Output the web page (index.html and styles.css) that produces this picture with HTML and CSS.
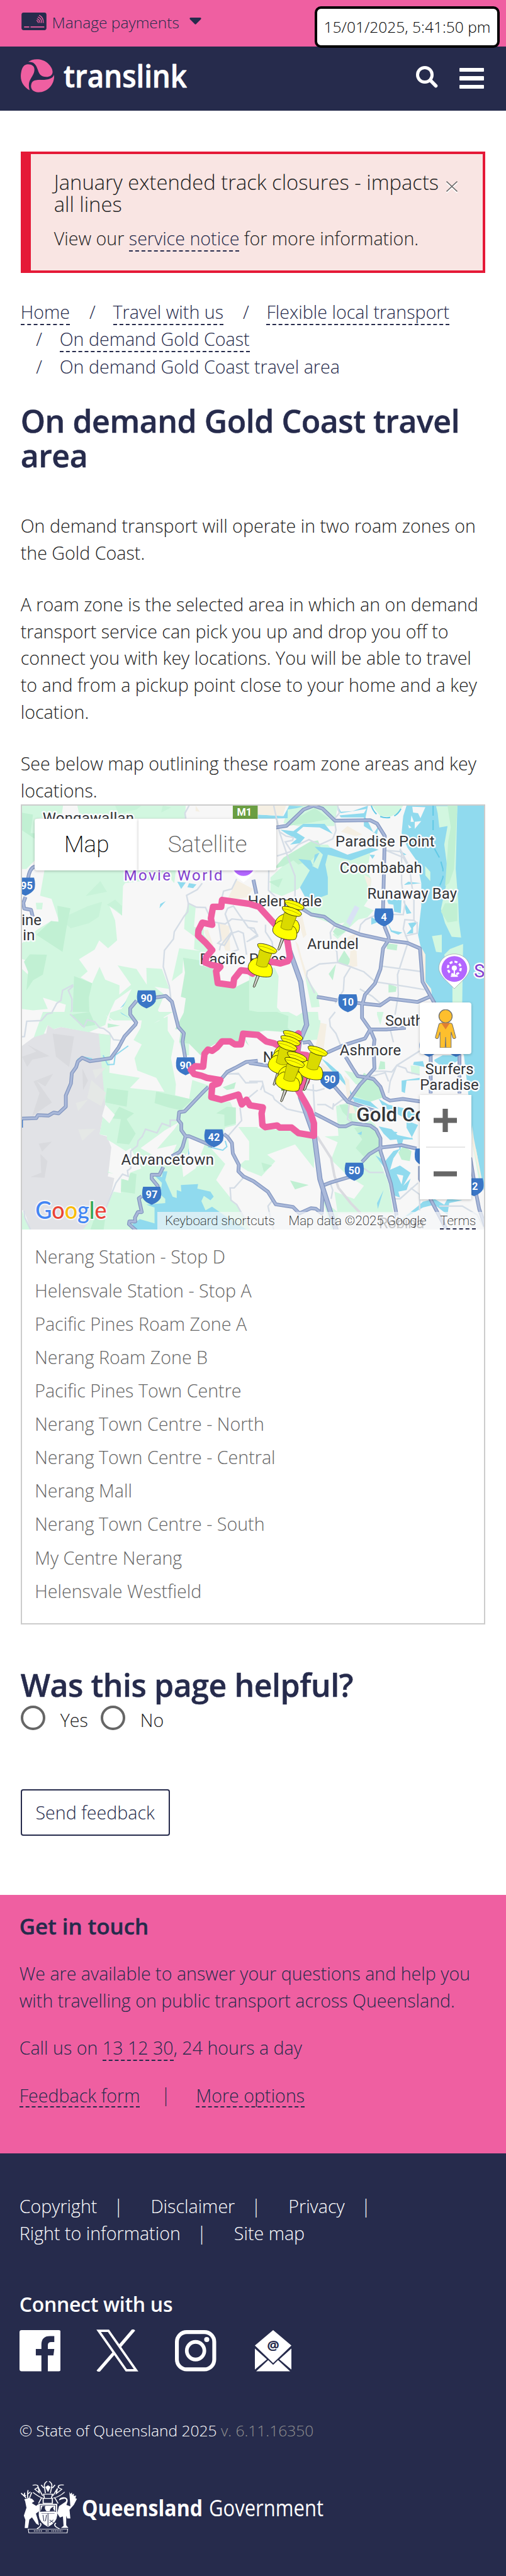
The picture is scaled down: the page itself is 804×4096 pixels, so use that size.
FILE: index.html
```html
<!DOCTYPE html>
<html lang="en">
<head>
<meta charset="utf-8">
<title>On demand Gold Coast travel area | Translink</title>
<link rel="stylesheet" href="styles.css">
</head>
<body>
<div class="timestamp">15/01/2025, 5:41:50 pm</div>
<div class="paybar">
  <svg class="card-icon" viewBox="0 0 58 41"><rect width="58" height="41" rx="5" fill="#262b4c"/><path d="M6 33.500h12M21 33.500h32" stroke="#ef5fa1" stroke-width="2.600"/><path d="M41 6c6 3 10 10 10 18M38 10c6 2 9 8 9 14M36 14c5 2 7 6 7 10M35 18c3 1 4 3 4 6" fill="none" stroke="#ef5fa1" stroke-width="2"/></svg>
  <span class="pay-label">Manage payments</span>
  <svg class="caret" viewBox="0 0 27 16"><path d="M2 0h23q3 1 1 4L15 15q-1.500 1.500-3 0L1 4Q-1 1 2 0z" fill="#262b4c"/></svg>
</div>
<header class="masthead">
  <svg class="swirl" viewBox="64 411 102 233" preserveAspectRatio="none"><g fill="#ef5fa1"><path d="M87 430C100 406 128 403 146 438C168 485 165 530 146 535C126 537 121 520 116 485C110 446 104 430 87 430z"/><path d="M85 447C100 445 110 465 104 508C95 555 84 565 91 629C70 600 61 560 65 505C68 465 75 448 85 447z"/><path d="M166 520C168 580 150 640 118 643C98 640 92 610 97 580C103 545 128 562 146 553C158 547 163 538 166 520z"/></g></svg>
  <svg class="wordmark" viewBox="0 0 200 70"><text x="0" y="48" textLength="196" lengthAdjust="spacingAndGlyphs">translink</text></svg>
  <svg class="search" viewBox="0 0 50 50"><circle cx="20" cy="20" r="16.500" fill="none" stroke="#fff" stroke-width="7"/><path d="M33 33l12 12" stroke="#fff" stroke-width="8" stroke-linecap="round"/></svg>
  <div class="burger"><i></i><i></i><i></i></div>
</header>
<main class="main">
  <section class="alert">
    <div class="alert-title"><h2>January extended track closures - impacts all lines</h2>
    <svg class="close" viewBox="0 0 20 20"><path d="M1.500 3.500l17 16M18.500 3.500l-17 16" stroke="#fff" stroke-width="2"/><path d="M1.500 1.500l17 16M18.500 1.500l-17 16" stroke="#666" stroke-width="1.700"/></svg></div>
    <p>View our <a>service notice</a> for more information.</p>
  </section>
  <ol class="crumbs"><li><a>Home</a></li><li><a>Travel with us</a></li><li><a>Flexible local transport</a></li><li><a>On demand Gold Coast</a></li><li>On demand Gold Coast travel area</li></ol>
  <h1>On demand Gold Coast travel<br>area</h1>
  <div class="copy">
    <p>On demand transport will operate in two roam zones on the Gold Coast.</p>
    <p>A roam zone is the selected area in which an on demand transport service can pick you up and drop you off to connect you with key locations. You will be able to travel to and from a pickup point close to your home and a key location.</p>
    <p>See below map outlining these roam zone areas and key locations.</p>
  </div>
  <section class="mapbox">
    <div class="map">
      <svg class="tiles" viewBox="51 1879 1077 989" preserveAspectRatio="none">
        <defs>
          <g id="shield"><path d="M-20-22H20Q24-8 21 4Q16 14 0 20Q-16 14-21 4Q-24-8-20-22z" fill="#3a76c6"/></g>
          <g id="pin" stroke="#26260a" stroke-width="3.600" stroke-linejoin="round">
            <path d="M18-90L-6-6Q0 4 6-6L34-85z" fill="#cfcfcf"/>
            <path d="M15-208C-12-200-38-170-36-138C-30-90 60-62 102-78C116-100 115-140 97-162z" fill="#ff0"/>
            <path d="M34-265L13-160Q40-135 78-145L110-240z" fill="#dada00" stroke="#8a8800"/>
            <path d="M22-304C45-320 138-284 140-254C132-230 112-238 85-244C55-252 18-275 22-304z" fill="#ff0"/>
            <path d="M24-292Q80-285 132-248" fill="none" stroke="#999500" stroke-width="3"/>
          </g>
          <g id="roads">
            <path d="M81 2021Q68 2025 65 2050L60 2085M59 2092L54 2106 56 2119 72 2122 76 2138M590 2052L597 2085M352 2328L386 2323 400 2336 415 2395 428 2410 425 2430 431 2466M318 2334L303 2352V2366L317 2385 315 2390 290 2417 276 2443 258 2468 209 2475 191 2467 181 2476 177 2489 167 2503 165 2527 153 2555V2581L136 2597 125 2595 113 2602 88 2601 84 2608 51 2609"/>
            <path d="M600 2474L573 2477 547 2491 529 2500 508 2525M485 2535L470 2550 430 2592 417 2594 415 2612 422 2621V2636L432 2650 425 2675 418 2687 400 2697M380 2722L371 2740H353V2749L367 2766V2775M330 2790L323 2795 325 2805 330 2827H321L314 2840 315 2849H301L300 2855 317 2870M432 2650H440L495 2673M521 2645L530 2652 540 2666 542 2690 556 2717 555 2732 567 2744 590 2755 624 2780 642 2809 682 2815 697 2830 724 2818 735 2819 749 2830 752 2760"/>
            <path d="M641 1930L667 1926 707 1888 730 1879 751 1886 780 1914 862 1913 878 1921 896 1950 892 2120M895 2160L905 2185V2192L892 2212 886 2260 873 2294 850 2320 843 2345V2374L862 2401 872 2425 870 2445 872 2492 853 2514 838 2530 813 2565"/>
            <path d="M704 2120L725 2133 755 2138 781 2157 840 2180 905 2194 948 2199 978 2212 984 2290 1012 2340M738 2325L785 2333M830 2339L885 2345 908 2329 972 2337 1000 2325"/>
            <path d="M862 2401H900L945 2397M862 2401L850 2422 800 2438 762 2455M805 2465L820 2490 833 2510 853 2513 870 2517 886 2535 895 2560 908 2567 938 2563 978 2569M738 2458L720 2430 705 2432M775 2530L810 2570 875 2592M580 2479L640 2488M732 2597L790 2627H805L820 2620 862 2625 876 2635 886 2655V2685L910 2760 922 2825 928 2868M843 2710L860 2692 885 2677 935 2671 970 2679M815 2745L770 2758 752 2765M978 2720V2750L1012 2815 1040 2868M1095 2700L1110 2790 1116 2820 1130 2860M1003 2460V2550M1070 2460V2550"/>
          </g>
        </defs>
        <rect x="51" y="1879" width="1077" height="989" fill="#f7f7f7"/>
        <!-- north-west -->
        <g transform="matrix(.3827 0 0 .3333 0 1860)" class="land">
          <g class="g1">
            <path d="M133 57H383L375 120 212 150V440L160 500H133z"/>
            <path d="M470 57H1130L1125 147H560L480 110z"/>
            <path d="M270 507H1070L1060 600 1030 560 760 600 748 620 742 827 665 760 700 860 712 1000 657 1055 603 1000 575 1065 480 1132 533 1217 490 1260 560 1300 605 1185 640 1275 727 1315 725 1380 797 1310 715 1175 830 1200 893 1310 890 1192 985 1200 1030 1340 940 1325 1000 1380 960 1490 1010 1560H660L670 1505 740 1480 800 1340 700 1420 640 1570H380L400 1450 260 1400 290 1480 200 1490 133 1480V1200L190 1260 200 1160 133 1130V1020L220 930 310 865 360 870 313 710 243 688z"/>
            <path d="M217 737H260L255 783H222zM1145 745L1190 770 1180 905 1240 920V960L1300 1050 1290 1100 1180 1060 1185 975 1120 920 1125 820z"/>
            <path d="M1090 1055L1260 1080 1240 1150 1115 1120 1110 1225 1045 1285z"/>
          </g>
          <g class="g2">
            <path d="M133 107L200 120 185 250 212 250V290L133 230zM348 758L428 775 410 870 380 1080 220 960 310 865 355 870z"/>
            <path class="soft" d="M365 850L535 760 620 730 600 835 540 880 430 915zM610 585L650 660 520 690zM700 715L742 760V825L710 790 650 750z"/>
            <path d="M180 1098L285 1100 260 1240 200 1280 160 1350 170 1220 145 1150zM450 1250L560 1300 540 1400 545 1560H440z"/>
            <path d="M1113 1120L1240 1145 1240 1180 1300 1200 1320 1310 1420 1335 1568 1250V1580H1108L1130 1405 1100 1395 1125 1225z"/>
            <path class="soft" d="M700 57H860L830 85 720 110zM990 57L1040 70 980 105z"/>
          </g>
          <g fill="#90daee"><path d="M1078 590L1130 595 1102 640zM1150 600L1195 608 1175 635 1140 628zM1008 725L970 775 975 745zM730 1475L772 1418 750 1460z"/></g>
          <g fill="#f5efe3"><path d="M1440 580L1540 640 1500 700 1380 720zM1335 880L1395 900 1400 1075 1370 1070 1345 970zM1240 930L1265 925 1305 1060 1275 1040zM1190 57L1215 100 1190 95z"/></g>
          <g class="minor"><path d="M1150 57L1125 110 1130 147M1230 600L1200 645 1135 685 1145 740 1142 800 1120 830 1060 940 1055 990 1000 1070 993 1185 1030 1320 1040 1420M1145 740L1195 768 1250 770 1290 870 1370 885 1410 850 1568 870M1330 880L1345 1000 1325 1020 1365 1035 1410 950 1450 935 1480 950 1500 1100M1410 1080L1450 1065 1380 850 1370 815 1385 775 1420 760 1455 820 1480 860 1510 910 1545 915 1568 970 1500 1010M1335 1070L1340 1040 1410 940 1370 815M1440 570L1410 640 1360 655 1350 700M445 1310L380 1350 370 1420 345 1440 315 1505 280 1515 250 1560M445 1320L415 1350 437 1410 437 1485 425 1515 465 1560"/></g>
        </g>
        <!-- north-east -->
        <g transform="matrix(.38197 0 0 .3333 580 1860)" class="land">
          <path fill="#90daee" d="M1030 57H1440V1560H1130L1110 1340 1075 1290V1100L1045 1040 1030 960 1050 760V600L1020 440 965 350 930 250 940 130 960 57z"/>
          <g class="g1">
            <path d="M240 57H540L520 200 430 200 300 200 210 180z"/>
            <path d="M750 57H940L905 110 860 135 800 130z"/>
            <path d="M480 380L620 420 740 380 720 520 745 570 735 700 700 760 760 790 720 840 520 890 380 830 330 780 350 720 320 640 380 500 460 460z"/>
            <path d="M130 560L215 470 270 430 330 440 370 330 480 330 500 360 420 500 300 640 200 690 130 660zM0 1200L155 1190 180 1250 170 1470 240 1560H0zM340 1245L420 1375 430 1465 380 1470z"/>
            <path d="M1140 60H1270L1260 500 1275 720 1280 870 1293 980 1235 975 1195 880 1170 780 1200 620 1210 500 1190 330 1210 200 1160 210 1150 110zM1115 970L1175 960 1175 1085 1140 1080zM1225 1060L1305 1025 1298 1560H1240V1310L1190 1100zM1073 480L1105 520V585L1075 545zM680 760L740 780 640 880 540 990 510 960z"/>
          </g>
          <g class="g2">
            <path d="M210 420L370 310 420 300 440 360 380 440 300 470 270 440 210 480 150 500zM280 150L400 75 490 150 380 175 230 200zM1210 57H1270L1250 500 1220 600 1195 620 1215 300 1230 210zM1195 740L1270 740 1270 865 1210 875 1170 800zM530 910L590 940 540 970 510 940zM840 1020L905 1030 900 1070 840 1060zM530 1165L510 1280 485 1235zM850 1305L900 1325 895 1360 850 1365zM120 590L205 565 180 630zM580 1070L620 1140 600 1180 540 1150z"/>
            <path d="M0 1490L235 1540 240 1580H0z"/>
          </g>
          <g fill="#90daee">
            <path d="M55 120L210 130 245 57 330 62 290 75 235 85 235 145 150 147 55 147zM540 57L560 100 630 95 725 57 710 140 560 140 550 125 700 110 715 80 560 110 540 90zM700 120L730 180 760 250 790 200 780 260 700 200zM190 225L270 235 330 185 460 185 510 255 430 210 330 205 290 245 340 280 310 320 250 330 290 290 230 255z"/>
            <path d="M400 345L500 352 600 400 740 350 790 365 620 440 480 400 465 470 480 560 480 680 420 705 350 715 310 630 370 510 300 430 375 440 390 480 400 400 430 385 385 480 420 500 450 400zM735 400L768 402 752 430zM840 715L930 710 925 810 885 800 880 750 850 745zM745 835L790 870 745 890zM845 880L870 930 935 945 910 960 865 940zM940 720L990 810 960 815 950 770zM945 610L970 590 1050 600 950 612zM970 880L1030 870 1000 910 1000 950 960 955 990 920zM915 370L960 400 930 405z"/>
          </g>
          <g fill="#f7f7f7"><path d="M995 65L1075 68 1045 145 1030 110 1000 105zM990 125L1005 170 985 170zM1010 170L1050 165 1010 220zM970 190L990 210 975 215z"/></g>
          <g fill="#f5efe3"><path d="M55 57L225 57 205 130 55 120zM600 200L690 260 650 270 560 240zM270 720L310 760 350 960 330 985 310 900 290 900 270 830zM280 1000L300 1030 320 1120 370 1300 400 1370 340 1250zM560 1000L650 950 660 1180 610 1190 620 1040zM700 540L745 570 735 660zM1045 1040L1075 1100V1290L1110 1340V1380L1060 1300z"/></g>
          <path fill="#d9e2f5" d="M645 755L673 772 615 900 592 870z"/>
          <g class="minor"><path d="M150 57L185 240 240 430 280 550 280 720M170 410L250 380 300 330 365 295 430 330 510 290 530 230 520 150 550 110 540 57M185 240L225 270 270 280 265 300 220 310 260 380M120 510L118 650 165 700M0 910L50 960 0 1000M100 890V940L140 1010 150 1100M520 895L495 945 500 1000 535 1080 540 1155 430 1165 355 1215 350 1250M540 1155L620 1185 580 1260 575 1350 525 1440M620 1185L700 1220 770 1290 970 1325 1070 1345M805 1180L1060 1220M670 945L680 890 710 855 790 815 940 820 950 750 930 600 930 380 835 370 940 420 980 500 990 600 1005 700 1005 860 950 855 940 920 970 1010 950 1080 905 1240 910 1380 890 1520M920 360L980 490M1005 860L1025 880V950L950 970M675 1340L750 1390 800 1440M350 1250L400 1370"/></g>
          <path d="M1122 57V340L1165 430 1182 500V560L1155 640" fill="none" stroke="#62c9e5" stroke-width="2" stroke-dasharray="16 7"/>
          <path d="M745 57Q770 142 840 142 905 142 935 57" fill="none" stroke="#62c9e5" stroke-width="2" stroke-dasharray="16 7"/>
        </g>
        <!-- south-west -->
        <g transform="matrix(.3827 0 0 .33807 0 2360)" class="land">
          <path fill="#e1e2e6" d="M133 235L235 150 280 150 290 90 330 120 370 105 600 150 675 160 665 400 640 640 605 845 650 860 690 970 655 1135 705 1150 640 1360 580 1502H185L145 1370H133z"/>
          <g class="g1">
            <path d="M260 0H660L640 90 540 140 370 105 325 120 290 90 265 155 205 175zM600 150L672 162 664 420 850 455 790 525 1000 552 950 455 835 405 818 320 862 225 812 195 855 110 870 0H1050L935 80 1020 30V130L1060 200 1040 320 1070 500 1065 575 1150 600 1170 470 1275 510 1290 600 1345 625 1400 620 1420 670 1435 780 1370 800 1345 870 1250 900 1370 1050 1315 1160 1470 1380 1520 1502H505L580 1400 650 1330 690 1240 735 1250 735 1150 720 1120 655 1110 690 970 680 900 650 880 650 855 605 845 640 640z"/>
            <path d="M1450 795H1568V1100H1510L1455 1060 1490 1025H1530L1560 960zM1130 0L1150 210V300H1120L1090 210zM133 1370L145 1410 185 1502H133z"/>
          </g>
          <g class="g2">
            <path d="M1120 0H1568V160L1480 140 1450 225 1340 200 1250 260 1220 300 1150 220 1090 210 1100 120 1065 120zM650 525L780 545 770 655 640 625zM950 550L1170 605 1100 680 1025 660 940 630zM725 655L815 700 770 740 825 840 785 915 710 905 735 740 680 735zM1315 700L1380 655 1435 660 1435 770 1365 790 1365 710zM430 20L545 0 580 90 500 105zM655 80L730 95 655 110zM800 1110L740 1160 735 1240 820 1255 830 1120zM550 1502L580 1400 640 1420 630 1502zM1355 520L1435 485 1425 530 1380 540z"/>
          </g>
          <g fill="#f7f7f7"><path d="M640 640L698 710 665 770 620 720zM680 900L765 960 795 940 860 1080 790 1110 780 1165 735 1150 690 1245 680 1230 700 1120 660 1105zM855 940L1000 820 1090 760 1060 810 955 945 1075 915 1030 1030 960 1010zM640 20L730 90 680 60zM1145 850L1250 900 1190 1080 1115 1140 1105 1040 1150 950zM1350 230L1450 240 1480 165 1568 175V650L1500 620 1450 590 1340 590 1300 580 1340 480 1180 405 1240 400 1260 280z"/></g>
          <g fill="#d9dade"><path d="M133 310L220 275 165 225 300 305 195 330 165 380zM320 150L450 170 420 380 340 310zM203 480L322 428 275 515 225 480 315 625 195 720 240 560zM235 910L315 895 255 965zM245 980L288 1030 270 1145 185 1140 250 1110zM500 390L535 475 505 540z"/></g>
          <g fill="#e5e8e6"><path d="M562 400L645 385 580 460zM555 470L645 560 615 650 530 595zM460 630L535 605 475 685zM475 810L580 808 500 890z"/></g>
          <g fill="#90daee"><path d="M990 1100H1018L1005 1160 1050 1275 1075 1285V1230L1103 1240 1100 1195 1205 1188 1200 1220 1280 1240 1300 1275 1280 1300 1240 1270 1225 1305 1250 1370 1290 1345 1360 1400 1500 1502H820L805 1465 850 1430 940 1460 940 1350 890 1330 1005 1320V1290L975 1260 985 1180 940 1130 985 1140zM1145 940L1153 980 1143 990zM730 0L800 50 740 15z"/></g>
          <path d="M470 330L500 310 560 325M627 300L655 365 693 362 700 300 780 235M1265 930L1355 955 1380 930 1370 890" fill="none" stroke="#90daee" stroke-width="2"/>
          <path class="g2" d="M1355 520L1435 485 1425 530 1380 540zM1490 180L1515 235 1495 210z"/>
          <g class="minor"><path d="M133 172L148 170 162 65 250 60 285 15 320 5M425 15L510 105 530 55 575 68 605 110 630 115 665 145 690 192 740 198M1080 748H1035V790L985 770 955 835 885 810 865 860 840 890 835 925 795 960V1080L775 1095 780 1135 745 1120 705 1180 645 1350M1370 430L1450 425 1495 490 1568 488M1380 425L1455 430M1568 540L1510 595M1460 660L1470 750 1385 860M1480 1145L1425 1215H1400L1405 1300 1440 1330 1510 1470M145 1370L150 1420 185 1502"/></g>
        </g>
        <!-- south-east -->
        <g transform="matrix(.38197 0 0 .33807 580 2360)" class="land">
          <path fill="#90daee" d="M1130 0H1440V1270L1400 1100 1360 870 1350 700 1310 300z"/>
          <g class="g1">
            <path d="M0 0H240L290 30 330 0H420L435 190 320 200 230 160 100 60zM360 20L435 60 430 190 350 160zM0 797L100 810 260 815 400 870 395 1080 280 915 110 985 160 1030 75 1135 0 1100zM580 405L640 420 745 500 740 620 620 600 700 510 650 500zM530 650L620 620 770 780 800 870 800 1040 850 1180 880 1390H540L520 1240 640 1290 700 1200 600 1130 500 1020 540 900 460 860 545 855zM780 0H820L800 90 780 20zM1360 900L1385 950 1415 1150H1400zM985 370L1040 375 1040 430 990 430zM450 1300L540 1380V1502H500z"/>
          </g>
          <g class="g2"><path d="M0 0H170L240 30 235 110 320 200 230 140 100 130 0 150zM700 420L770 470 820 590 740 620 640 580 660 520zM550 640L620 640 630 760 570 690zM640 800L740 780 790 850 790 930 700 1000 650 940 690 880zM910 970L940 925 990 960 980 1030 930 1020zM250 1163L363 1195 280 1225zM75 1040L140 1060 90 1105zM800 340L828 345 830 395 788 398z"/></g>
          <g fill="#90daee">
            <path d="M440 320L480 350 560 430 640 590 740 620 790 670 760 660 640 620 590 510 490 390zM790 600L850 640 1040 690V740L960 740 880 690 820 660zM790 790L870 810 905 850 990 870 1030 780 960 750 960 800 1000 880 940 880 920 960 900 880 860 885 820 840zM850 820L905 830 870 870zM930 475L1040 455V470L960 475 950 560 930 550zM770 990L830 1030 880 960 920 945 880 1010 860 1090 920 1060 985 1110 940 1200 985 1150 960 1230 910 1240 920 1280 890 1270 835 1130 840 1100zM820 1230L785 1360 780 1320zM940 1130L900 1120 930 1190zM1130 330L1180 300 1280 300 1270 340 1190 390 1130 340zM1060 1310L1130 1290 1190 1330 1210 1290 1300 1300 1220 1320 1210 1400 1130 1330 1060 1350 920 1440 1030 1340zM1005 345L1060 340 1070 380 1000 365z"/>
            <path d="M660 840L688 825 685 850z"/>
          </g>
          <g fill="#f5efe3"><path d="M435 75L473 85 450 300 400 270zM580 440L610 470 620 610 650 700 610 700zM1360 780L1370 870 1400 1040 1435 1250 1400 1100 1360 900zM440 350L540 440 510 460 440 400z"/></g>
          <g class="minor"><path d="M525 0L490 50 495 100 530 150 575 280M860 120L880 210M850 560L860 480 900 370 1040 270M750 410L830 410 870 415 900 370 955 390 965 415 1040 435M850 480L830 420 730 450M0 480H80L95 550 145 580 155 605 230 670 385 710M85 500L70 540M390 500L400 700M270 520L410 545 460 530M515 650L570 605 640 610M415 640L465 640 510 670 515 630M610 640L600 740 625 765M495 1180L510 1230 500 1290M150 1290L115 1340 130 1420 150 1502M700 1080L735 1108H820M890 1290L920 1290 1030 1180M985 1215L1040 1260 1040 1370M1160 1340L1300 1340 1390 1400 1440 1502"/></g>
          <path d="M415 860L500 1010 520 1130 545 1215 620 1320 680 1390" fill="none" stroke="#dadbe0" stroke-width="4"/>
        </g>
        <!-- main roads, casing under fill -->
        <use href="#roads" class="casing"/>
        <use href="#roads" class="fillroad"/>
        <path d="M670 2205L700 2290 707 2340 714 2390 697 2430 690 2480 700 2560 732 2650 745 2750 783 2870" fill="none" stroke="#8397c2" stroke-width="12"/>
        <path d="M670 2205L700 2290 707 2340 714 2390 697 2430 690 2480 700 2560 732 2650 745 2750 783 2870" fill="none" stroke="#aab9da" stroke-width="8"/>
        <!-- place names -->
        <g class="labels">
          <text x="99" y="1920" textLength="213">Wongawallan</text>
          <text x="781" y="1975" textLength="231">Paradise Point</text>
          <text x="791" y="2036" textLength="192">Coombabah</text>
          <text x="855" y="2096" textLength="209">Runaway Bay</text>
          <text x="577" y="2114" textLength="172">Helensvale</text>
          <text x="715" y="2214" textLength="120">Arundel</text>
          <text x="465" y="2249" textLength="202">Pacific Pines</text>
          <text x="50" y="2157">ine</text><text x="53" y="2193">in</text>
          <text x="897" y="2392" textLength="152">Southport</text>
          <text x="791" y="2462" textLength="143">Ashmore</text>
          <text x="612" y="2477">Nerang</text>
          <text x="990" y="2506" textLength="113">Surfers</text>
          <text x="978" y="2542" textLength="137">Paradise</text>
          <text x="282" y="2717" textLength="216">Advancetown</text>
          <text x="830" y="2616" class="city">Gold Coast</text>
          <text x="882" y="2865" textLength="106" class="faint">Robina</text>
          <text x="288" y="2054" textLength="230" class="poi">Movie World</text>
          <text x="1104" y="2280" class="poi big">S</text>
        </g>
        <!-- attraction markers -->
        <path d="M535 2025Q545 2042 567 2058Q589 2042 600 2025z" fill="#fff"/><circle cx="567" cy="2017" r="26" fill="#b366ff"/>
        <path d="M1058 2306C1045 2292 1022 2275 1022 2258C1022 2238 1040 2225 1058 2225S1094 2238 1094 2258C1094 2275 1071 2292 1058 2306z" fill="#fff" stroke="#999" stroke-width="1"/>
        <circle cx="1058" cy="2260" r="30" fill="#b366ff"/><circle cx="1058" cy="2258" r="15" fill="none" stroke="#fff" stroke-width="5" stroke-dasharray="7 4.780"/><circle cx="1058" cy="2258" r="6" fill="#fff"/><path d="M1058 2260v13l8 4h-16l8-4" stroke="#fff" stroke-width="3" fill="#fff"/>
        <!-- route shields -->
        <path d="M542 1879h58v32h-58z" fill="#6a9e42"/>
        <g class="shields">
          <text x="569" y="1902">M1</text>
          <use href="#shield" x="59" y="2069"/><text x="62" y="2074">95</text>
          <use href="#shield" x="341" y="2332"/><text x="341" y="2337">90</text>
          <use href="#shield" x="894" y="2141"/><text x="894" y="2147">4</text>
          <use href="#shield" x="810" y="2341"/><text x="810" y="2346">10</text>
          <use href="#shield" x="432" y="2488"/><text x="432" y="2493">90</text>
          <use href="#shield" x="498" y="2656"/><text x="498" y="2661">42</text>
          <use href="#shield" x="353" y="2790"/><text x="353" y="2795">97</text>
          <use href="#shield" x="768" y="2521"/><text x="768" y="2526">90</text>
          <use href="#shield" x="825" y="2734"/><text x="825" y="2739">50</text>
          <use href="#shield" x="1104" y="2770"/><text x="1106" y="2775">2</text>
          <use href="#shield" x="988" y="2701"/><use href="#shield" x="999" y="2445"/><use href="#shield" x="1062" y="2445"/>
        </g>
        <path d="M51 2612h2v18h-2z" fill="#3a76c6"/><path d="M655 2510h54v34h-54z" fill="#6a9e42"/>
        <!-- roam zone outlines -->
        <g fill="none" stroke="#ef5fa1" stroke-width="15" stroke-linejoin="round" stroke-linecap="round">
          <path d="M517 2099L515 2115 496 2115 491 2142 494 2157 471 2152 462 2170 461 2182 478 2198 494 2216 480 2232 478 2245 490 2250 513 2255 503 2265 507 2293 543 2298 545 2283 561 2263 578 2265 588 2271 611 2253 632 2243 653 2247 670 2242 675 2232 670 2200 666 2180 641 2157 603 2115 580 2108z"/>
          <path d="M566 2411L561 2436 547 2436 536 2429 517 2429 505 2443 494 2451 484 2448 476 2458 473 2488 454 2487 444 2495 452 2505 469 2509 482 2514 513 2519 509 2527 494 2532 492 2559 515 2565 555 2553 563 2576 574 2565 582 2578 612 2583 609 2597 611 2624 618 2629 645 2625 651 2630 679 2630 695 2643 731 2649V2620L721 2590 710 2570 694 2543 714 2522 714 2461 691 2458 695 2410 660 2445 637 2433 620 2429 601 2414z"/>
        </g>
        <g transform="matrix(.38197 0 0 .3333 580 1860)"><use href="#pin" x="195" y="1025"/><use href="#pin" x="180" y="1070"/><use href="#pin" x="30" y="1330"/></g>
        <g transform="matrix(.38197 0 0 .33807 580 2360)"><use href="#pin" x="187" y="437"/><use href="#pin" x="172" y="472"/><use href="#pin" x="152" y="508"/><use href="#pin" x="338" y="543"/><use href="#pin" x="212" y="582"/><use href="#pin" x="197" y="622"/></g>
        <text x="82" y="2843" textLength="166" lengthAdjust="spacingAndGlyphs" class="google"><tspan fill="#4285f4">G</tspan><tspan fill="#ea4335">o</tspan><tspan fill="#fbbc05">o</tspan><tspan fill="#4285f4">g</tspan><tspan fill="#34a853">l</tspan><tspan fill="#ea4335">e</tspan></text>
      </svg>
      <div class="map-type"><button class="on">Map</button><button>Satellite</button></div>
      <div class="pegman"><svg viewBox="0 0 50 90"><circle cx="25" cy="16" r="15.500" fill="#fdbf2d" stroke="#707070" stroke-width="2"/><path d="M14 32h22q4 0 5 4l8 30q-3 5-7 1l-4-14v37H26l-1-25-1 25H12V53L8 67q-4 4-7-1L9 36q1-4 5-4z" fill="#fdbf2d" stroke="#707070" stroke-width="1.500"/><path d="M15 32h20L25 47z" fill="#e07f30"/></svg></div>
      <div class="zoom"><svg viewBox="0 0 54 54"><path d="M21 0h12v21h21v12H33v21H21V33H0V21h21z"/></svg><hr><svg viewBox="0 0 54 54"><path d="M0 21h54v12H0z"/></svg></div>
      <div class="credit"><span>Keyboard shortcuts</span><span>Map data ©2025 Google</span><a>Terms</a></div>
    </div>
    <ul class="stops"><li>Nerang Station - Stop D</li><li>Helensvale Station - Stop A</li><li>Pacific Pines Roam Zone A</li><li>Nerang Roam Zone B</li><li>Pacific Pines Town Centre</li><li>Nerang Town Centre - North</li><li>Nerang Town Centre - Central</li><li>Nerang Mall</li><li>Nerang Town Centre - South</li><li>My Centre Nerang</li><li>Helensvale Westfield</li></ul>
  </section>
  <section class="helpful">
    <h2>Was this page helpful?</h2>
    <div class="choices"><label><i></i><span>Yes</span></label><label><i></i><span>No</span></label></div>
    <button class="send">Send feedback</button>
  </section>
</main>
<section class="touch">
  <h2>Get in touch</h2>
  <p>We are available to answer your questions and help you with travelling on public transport across Queensland.</p>
  <p>Call us on <a>13 12 30</a>, 24 hours a day</p>
  <p class="options"><a>Feedback form</a><span class="bar">|</span><a>More options</a></p>
</section>
<footer class="footer">
  <div class="legal"><div><span>Copyright</span><b>|</b><span>Disclaimer</span><b>|</b><span>Privacy</span><b>|</b></div><div><span>Right to information</span><b>|</b><span>Site map</span></div></div>
  <h2>Connect with us</h2>
  <div class="social">
    <svg class="fb" viewBox="0 0 96 96"><path fill="#fff" d="M5 0h86q5 0 5 5v86q0 5-5 5H66V59h13l2-15H66V35q0-7 8-7h7V14H71q-20 0-20 20v10H38v15h13v37H5q-5 0-5-5V5q0-5 5-5z"/></svg>
    <svg class="xx" viewBox="0 0 98 99"><path fill="none" stroke="#fff" stroke-width="5.500" d="M5 3h23l65 93H70z"/><path stroke="#fff" stroke-width="7.500" d="M88 0L53 41M42 54L3 99"/></svg>
    <svg class="ig" viewBox="0 0 96 96"><rect x="4.500" y="4.500" width="87" height="87" rx="23" fill="none" stroke="#fff" stroke-width="9"/><circle cx="48" cy="48" r="20.500" fill="none" stroke="#fff" stroke-width="8.500"/><circle cx="74" cy="22" r="6" fill="#fff"/></svg>
    <svg class="ml" viewBox="0 0 85 96"><path fill="#fff" d="M42.500 0L85 36 42.500 77 0 36zM0 43L28 68 0 92zM85 43L57 68 85 92zM31 70l11.500 11L54 70l28 26H3z"/><text x="42.500" y="47" text-anchor="middle">@</text></svg>
  </div>
  <p class="copyright">© State of Queensland 2025 <span>v. 6.11.16350</span></p>
  <div class="govt">
    <svg class="crest" viewBox="94 678 258 366" preserveAspectRatio="none" fill="#fff">
      <path d="M128 1015h180l-3 27H131z" fill="none" stroke="#fff" stroke-width="3"/><path d="M154 1028h40M208 1028h12M234 1028h50" stroke="#fff" stroke-width="7" stroke-dasharray="4 4"/>
      <path d="M176 838h84v80q-2 50-42 82q-40-32-42-82z"/>
      <path d="M183 848h70v45h-70zM188 905h60M218 905v90M195 915l4 42h8l4-42M225 950l18 20M243 950l-18 20" fill="none" stroke="#262b4c" stroke-width="3"/>
      <path d="M184 892q5-20 8-38l14-2q-6 18 5 38zM226 890q0-25 22-34q-14 12 2 32z" fill="#262b4c"/>
      <path d="M110 806l22-10 14 8 10 16-12 12 20 20 12-14 3 50-16 18 10 50 4 32-12-10-20-45-12 15-6 60h-15l3-58-7-30 12-55-6-45z"/>
      <path d="M118 798Q108 785 112 760M126 798Q124 770 127 742M112 788L96 762M118 780l-20-8M134 796Q138 780 144 758M124 772l14-18" fill="none" stroke="#fff" stroke-width="5"/>
      <path d="M315 752l4 16 8-10 1 16 8-8v18l10-5-3 20 7 4-14 42-20 35 4 60h-14l-5-18v66l10 18h-34l12-14-3-66-14 8-12-30 8-50 30-30q8-18-4-22-14 2-26 12 0-18 18-22 22-2 22 26l-6 28 18 10z"/>
      <g fill="none" stroke="#fff" stroke-width="5"><path d="M198 770h40l-4 30h-32zM196 800h42v34h-42zM214 680q-16 15-12 38l4 45M223 680q16 15 12 38l-6 45M187 705l12 22M250 705l-12 22M148 708q26-10 25 14l-15 14 20 24-4-36 20 58M290 706q-28-5-25 18l16 12-25 30 5-36-20 50M150 758q30 35 45 40M294 755q-25 35-52 42M175 835l14-40M264 835l-16-42"/><path d="M168 1012q25-20 15-40M270 1012q-32-20-16-40" /></g>
      <path d="M206 720l12-12 12 12-12 36z"/>
    </svg>
    <svg class="govtext" viewBox="0 0 385 60"><text x="0" y="42" textLength="192" lengthAdjust="spacingAndGlyphs" font-weight="700">Queensland</text><text x="202" y="42" textLength="182" lengthAdjust="spacingAndGlyphs">Government</text></svg>
  </div>
</footer>
</body>
</html>
```

FILE: styles.css
```css
* { box-sizing: border-box; }
html, body { margin: 0; padding: 0; }
body {
  width: 804px;
  height: 4096px;
  position: relative;
  overflow: hidden;
  background: #fff;
  color: #222;
  font-family: "Open Sans", "Noto Sans", sans-serif;
  font-weight: 300;
  font-size: 28.640px;
  line-height: 42.960px;
}
h1, h2, p, ul, ol { margin: 0; padding: 0; }
ul, ol { list-style: none; }
svg { display: block; flex: none; }
a { color: #262b4c; border-bottom: 2px dashed #262b4c; }
button { font-family: inherit; font-weight: 300; margin: 0; padding: 0; }

.timestamp {
  position: absolute;
  left: 500px;
  top: 10px;
  width: 294px;
  height: 66px;
  border: 4px solid #000;
  border-radius: 10px;
  background: #fff;
  color: #000;
  font-size: 24.550px;
  line-height: 58px;
  text-align: center;
  white-space: nowrap;
}
.paybar {
  height: 73.500px;
  background: #ef5fa1;
  color: #262b4c;
  display: flex;
  align-items: flex-start;
  padding-left: 33.500px;
}
.card-icon { width: 40px; height: 28px; margin-top: 20px; }
.pay-label { font-size: 24.550px; line-height: 36px; margin: 18px 0 0 9px; width: 202px; white-space: nowrap; }
.caret { width: 19px; height: 11px; margin: 28px 0 0 16px; }

.masthead {
  height: 102.500px;
  background: #262b4c;
  display: flex;
  align-items: flex-start;
  padding-left: 32.500px;
}
.swirl { width: 53px; height: 53px; margin-top: 20px; }
.wordmark { width: 200px; height: 70px; margin: 17px 0 0 15px; }
.wordmark text { font: 600 49px "Open Sans", sans-serif; fill: #fff; stroke: #fff; stroke-width: .8px; stroke-linejoin: round; }
.search { width: 35px; height: 35px; margin: 31px 0 0 360px; }
.burger { width: 39px; margin: 34px 0 0 34px; display: flex; flex-direction: column; gap: 7.500px; }
.burger i { height: 6.300px; background: #fff; border-radius: 1px; }

.main { height: 2837px; padding: 65.400px 32.700px 0; }
.alert {
  height: 192.200px;
  border: 4px solid #e51937;
  border-left-width: 16px;
  background: #f9e5e3;
  padding: 27.900px 0 0 37px;
  color: #222;
}
.alert-title { display: flex; }
.alert h2 { width: 622px; font-weight: 300; font-size: 32.730px; line-height: 34.360px; }
.close { width: 20px; height: 20px; margin-top: 14px; }
.alert p { margin-top: 16.100px; }
.crumbs { margin-top: 40.800px; display: flex; flex-wrap: wrap; column-gap: 6.500px; color: #262b4c; line-height: 43.100px; }
.crumbs li { white-space: nowrap; }
.crumbs li + li::before { content: "/"; display: inline-block; width: 37.500px; margin-left: 24.500px; }
h1, .helpful h2 { color: #262b4c; font-size: 50px; line-height: 55px; font-weight: 600; letter-spacing: -.450px; -webkit-text-stroke: .5px #262b4c; white-space: nowrap; }
h1 { margin-top: 38.200px; }
.copy { margin-top: 62.800px; display: flex; flex-direction: column; gap: 39px; margin-right: -12px; }
.copy p:nth-child(2) { padding-right: 10px; }

.mapbox { height: 1303.800px; border: 2px solid #ccc; }
.map { position: relative; height: 674.200px; overflow: hidden; }
.tiles { width: 100%; height: 100%; }
.land path { vector-effect: non-scaling-stroke; }
.g1 { fill: #d2f7e0; }
.g2 { fill: #c1f0d3; }
.soft { opacity: .6; }
.minor { fill: none; stroke: #d5dde6; stroke-width: 2.400; }
.casing { fill: none; stroke: #8094be; stroke-width: 8.500; stroke-linejoin: round; }
.fillroad { fill: none; stroke: #a9b8d9; stroke-width: 5; stroke-linejoin: round; }
.labels text {
  font: 400 35px Roboto, sans-serif;
  fill: #333438;
  stroke: #fafcfd;
  stroke-width: 7px;
  stroke-linejoin: round;
  paint-order: stroke;
}
.labels .city { font-size: 46px; font-weight: 500; }
.labels .faint { fill: #555; }
.labels .poi { fill: #8440d0; }
.labels .big { font-size: 42px; }
.shields text { font: 700 24px Roboto, sans-serif; fill: #fff; text-anchor: middle; }
.google { font: 500 56px Lato, sans-serif; stroke: #f3f5f7; stroke-width: 6px; paint-order: stroke; }

.map-type { position: absolute; left: 20.500px; top: 20.500px; display: flex; height: 82px; }
.map-type button { border: 0; background: #fff; width: 165px; font: 200 36.800px/80px Roboto, sans-serif; border-radius: 4px 0 0 4px; box-shadow: 0 1px 4px rgba(0,0,0,.25); color: #000; }
.map-type button + button { width: 219px; border-radius: 0 4px 4px 0; color: #565656; }
.pegman, .zoom { position: absolute; right: 20.500px; width: 82px; background: #fff; box-shadow: 0 1px 4px rgba(0,0,0,.25); }
.pegman { top: 312.500px; height: 82px; border-radius: 4px; padding: 11px 24px; }
.pegman svg { width: 34px; height: 61px; }
.zoom { top: 459.500px; height: 166px; display: flex; flex-direction: column; align-items: center; justify-content: space-between; padding: 22px 0; }
.zoom svg { width: 37px; height: 37px; fill: #666; }
.zoom hr { width: 62px; height: 2px; border: 0; margin: 0; background: #e6e6e6; }
.credit {
  position: absolute;
  right: 0;
  bottom: 0;
  width: 519px;
  height: 28.500px;
  padding: 0 13px 0 12px;
  background: rgba(245,247,248,.7);
  display: flex;
  justify-content: space-between;
  font: 200 20.500px/28px Roboto, sans-serif;
  color: #111;
  white-space: nowrap;
}
.credit a { color: #222; height: 28.500px; }

.stops { padding: 16px 0 0 20.500px; color: #666; }
.stops li { height: 53.140px; line-height: 53.140px; }

.helpful h2 { margin-top: 68.500px; }
.choices { display: flex; height: 46px; margin-top: 5.500px; gap: 20px; }
.choices label { display: flex; }
.choices i { width: 39px; height: 39px; border: 4px solid #666; border-radius: 50%; }
.choices span { margin: 2px 0 0 24px; }
.send { display: block; width: 237px; height: 74px; margin-top: 87px; padding-bottom: 2px; border: 2px solid #262b4c; border-radius: 4px; background: #fff; color: #262b4c; font-size: 28.640px; }

.touch { height: 411px; background: #ef5fa1; color: #262b4c; padding: 20px 30.700px 0; }
.touch h2 { font-size: 35px; line-height: 60px; font-weight: 600; letter-spacing: -.1px; -webkit-text-stroke: .4px #262b4c; }
.touch p { margin-top: 32px; margin-right: -12px; }
.touch h2 + p { margin-top: 24px; }
.touch .options { display: flex; margin-top: 32px; }
.options a { line-height: 39px; height: 41px; padding-top: 2px; }
.bar { width: 89px; text-align: center; padding-right: 7px; }

.footer { height: 672px; background: #262b4c; color: #fff; padding: 63px 30.700px 0; }
.legal div { display: flex; height: 43px; }
.legal b { font-weight: 300; margin: 0 43.500px 0 26px; }
.footer h2 { font-size: 32px; line-height: 48px; font-weight: 600; margin-top: 67px; letter-spacing: -.3px; }
.social { display: flex; margin-top: 17px; height: 67px; }
.fb, .ig { width: 65.500px; height: 65.500px; }
.xx { width: 67px; height: 67px; margin: -1px 58px 0 57px; }
.ml { width: 58px; height: 65.500px; margin-left: 61px; }
.ml text { font: 700 32px "Open Sans", sans-serif; fill: #262b4c; }
.copyright { font-size: 24.550px; line-height: 36px; margin-top: 75px; }
.copyright span { color: #8f8f8f; }
.govt { display: flex; margin-top: 62px; }
.crest { width: 90px; height: 83px; margin-left: 2px; }
.govtext { width: 385px; height: 60px; margin: 14px 0 0 7px; }
.govtext text { font-family: "Open Sans", sans-serif; font-size: 36px; fill: #fff; }
.govtext text + text { font-weight: 400; }
```
